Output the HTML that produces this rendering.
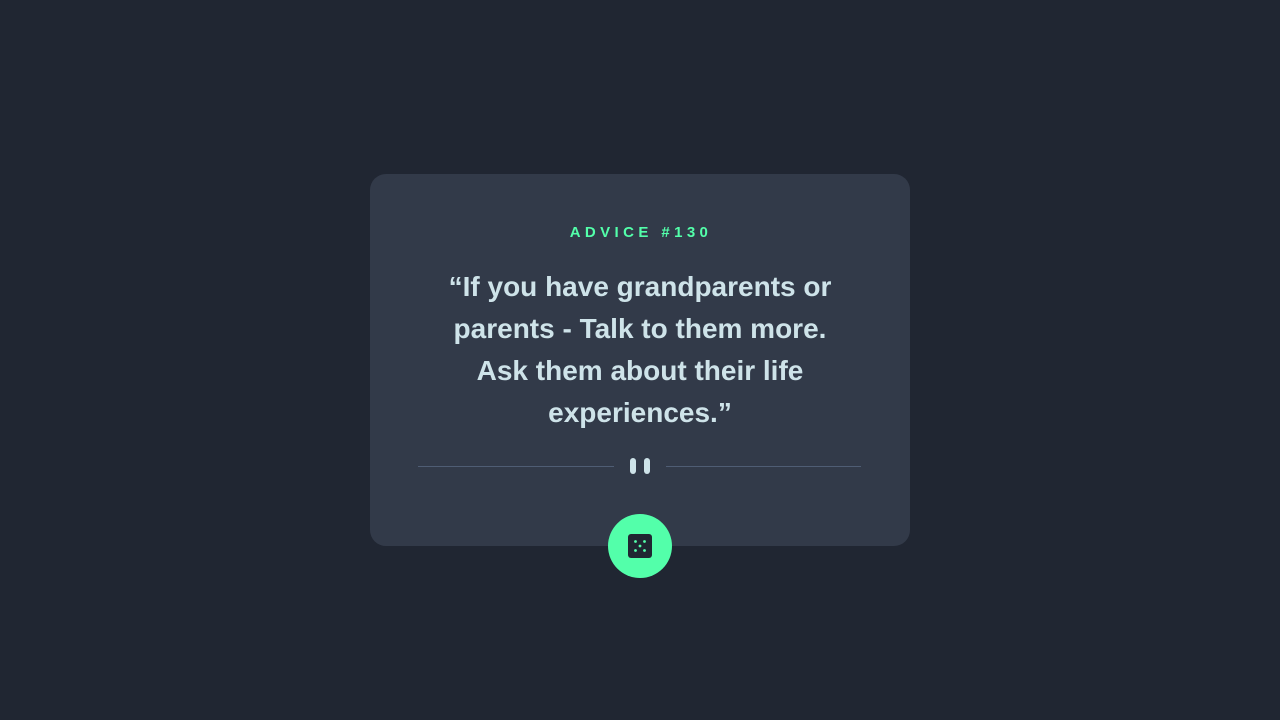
<!DOCTYPE html>
<html><head><style>
body{margin:0;background:#202632;width:1280px;height:720px;font-family:"Liberation Sans",sans-serif;position:relative;overflow:hidden}
.card{position:absolute;left:370px;top:174px;width:540px;height:372px;background:#323a49;border-radius:16px}
.h{position:absolute;top:224px;left:370px;width:540px;text-align:center;color:#53ffaa;font-size:15px;font-weight:bold;letter-spacing:4.4px;text-indent:2px}
.q{position:absolute;top:266px;left:435px;width:410px;text-align:center;color:#cee3e9;font-size:28px;font-weight:bold;line-height:42px}
.l{position:absolute;top:466px;height:1px;background:#4f5d74}
.b{position:absolute;top:458px;width:6px;height:16px;background:#cee3e9;border-radius:3px}
.btn{position:absolute;left:608px;top:514px;width:64px;height:64px;border-radius:50%;background:#53ffaa}
</style></head><body>
<div class="card"></div>
<div class="h">ADVICE #130</div>
<div class="q">“If you have grandparents or parents - Talk to them more. Ask them about their life experiences.”</div>
<div class="l" style="left:418px;width:196px"></div>
<div class="l" style="left:666px;width:195px"></div>
<div class="b" style="left:630px"></div><div class="b" style="left:644px"></div>
<div class="btn"><svg style="position:absolute;left:20px;top:20px" width="24" height="24" viewBox="0 0 24 24"><rect width="24" height="24" rx="3" fill="#202632"/><g fill="#53ffaa"><circle cx="7.5" cy="7.5" r="1.4"/><circle cx="16.5" cy="7.5" r="1.4"/><circle cx="12" cy="12" r="1.4"/><circle cx="7.5" cy="16.5" r="1.4"/><circle cx="16.5" cy="16.5" r="1.4"/></g></svg></div>
</body></html>
